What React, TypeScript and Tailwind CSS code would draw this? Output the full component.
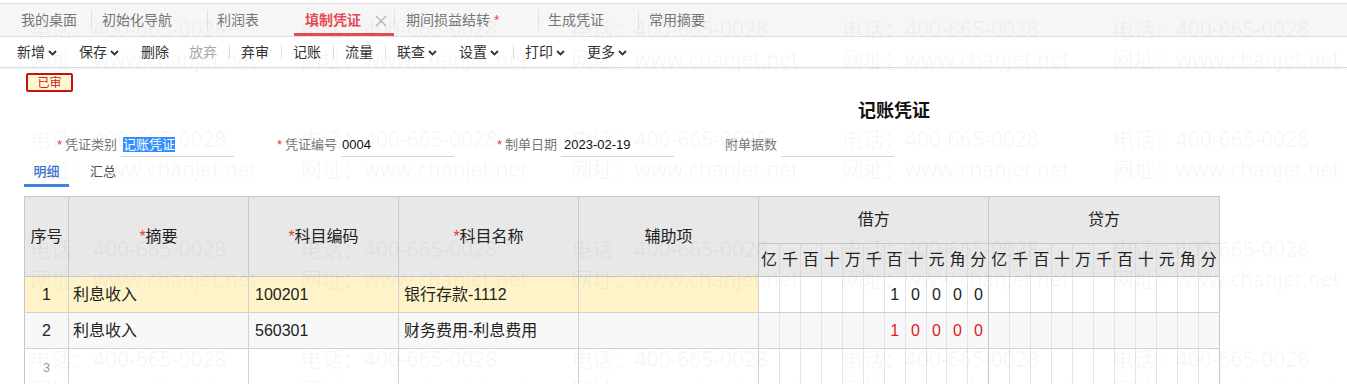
import React from "react";

const FONT = '"Liberation Sans","Noto Sans CJK SC",sans-serif';

function Chevron() {
  return (
    <svg width="9" height="6" viewBox="0 0 9 6" className="ml-[3px] mt-[2px]">
      <path d="M1 1 L4.5 4.5 L8 1" fill="none" stroke="#333" strokeWidth="1.8" />
    </svg>
  );
}

function Sep() {
  return <span className="ml-[12px] mr-[11px] h-[14px] w-px bg-[#dddddd]" />;
}

function TabSep() {
  return <span className="h-[20px] w-px bg-[#e2e2e2] self-center" />;
}

const digitsLabels = ["亿", "千", "百", "十", "万", "千", "百", "十", "元", "角", "分"];

function Watermark() {
  const tiles: { x: number; y: number }[] = [];
  for (let j = 0; j < 4; j++) {
    for (let i = 0; i < 5; i++) {
      tiles.push({ x: 30 + 270.7 * i, y: 14 + 110 * j });
    }
  }
  return (
    <div className="pointer-events-none absolute inset-0 overflow-hidden">
      {tiles.map((t, k) => (
        <div
          key={k}
          className="absolute whitespace-nowrap text-[21px] leading-[30px] text-black/[0.055]"
          style={{ left: t.x, top: t.y, fontFamily: '"Open Sans","Noto Sans CJK SC",sans-serif' }}
        >
          <div>电话：400-665-0028</div>
          <div>网址：www.chanjet.net</div>
        </div>
      ))}
    </div>
  );
}

export default function App() {
  const digitCols = Array.from({ length: 22 });
  return (
    <div className="relative h-[384px] w-[1347px] overflow-hidden bg-white text-[#333]" style={{ fontFamily: FONT }}>
      {/* Tab bar */}
      <div className="pt-[3px]">
        <div className="flex h-[34px] border-y border-[#e0e0e0] bg-[#f6f6f6] text-[14px] text-[#777]">
          <div className="flex w-[91px] items-center pl-[21px] pt-[1px]">我的桌面</div>
          <TabSep />
          <div className="flex w-[115px] items-center pl-[10px] pt-[1px]">初始化导航</div>
          <TabSep />
          <div className="flex w-[86px] items-center pl-[9px] pt-[1px]">利润表</div>
          <div className="flex w-[100px] items-center border-b-[3px] border-[#e84a55] pl-[11px] pt-[4px] font-bold text-[#e84a55]">
            填制凭证
            <svg width="12" height="12" viewBox="0 0 12 12" className="ml-[14px]">
              <path d="M1 1 L11 11 M11 1 L1 11" stroke="#b5b5b5" strokeWidth="1.3" />
            </svg>
          </div>
          <TabSep />
          <div className="flex w-[143px] items-center pl-[11px] pt-[1px]">
            期间损益结转<span className="ml-[4px] text-[#e84a55]">*</span>
          </div>
          <TabSep />
          <div className="flex w-[99px] items-center pl-[9px] pt-[1px]">生成凭证</div>
          <TabSep />
          <div className="flex items-center pl-[10px] pt-[1px]">常用摘要</div>
        </div>
        {/* Toolbar */}
        <div className="flex h-[31px] items-center border-b border-[#dcdcdc] pl-[17px] text-[14px] text-[#333] shadow-[0_1px_2px_rgba(0,0,0,0.06)]">
          <span className="flex items-center">新增<Chevron /></span>
          <span className="ml-[22px] flex items-center">保存<Chevron /></span>
          <span className="ml-[22px]">删除</span>
          <span className="ml-[20px] text-[#aaaaaa]">放弃</span>
          <Sep />
          <span>弃审</span>
          <Sep />
          <span>记账</span>
          <Sep />
          <span>流量</span>
          <Sep />
          <span className="flex items-center">联查<Chevron /></span>
          <span className="ml-[22px] flex items-center">设置<Chevron /></span>
          <span className="ml-[14px] mr-[11px] h-[14px] w-px bg-[#dddddd]" />
          <span className="flex items-center">打印<Chevron /></span>
          <span className="ml-[22px] flex items-center">更多<Chevron /></span>
        </div>
      </div>

      {/* Stamp */}
      <div className="ml-[26px] mt-[5px] flex h-[19px] w-[47px] items-center justify-center rounded-[2px] border-2 border-[#c41212] bg-[#fff7d2] text-[12px] leading-none text-[#d42020]">
        已审
      </div>

      {/* Title */}
      <div className="mt-[7px] pl-[858px] text-[18px] font-bold leading-[24px] text-[#111]">记账凭证</div>

      {/* Form row */}
      <div className="mt-[10px] flex pl-[57px] text-[13px]">
        {[
          { star: true, label: "凭证类别", value: "记账凭证", sel: true },
          { star: true, label: "凭证编号", value: "0004" },
          { star: true, label: "制单日期", value: "2023-02-19" },
          { star: false, label: "附单据数", value: "" },
        ].map((f, i) => (
          <div key={i} className="flex h-[24px] w-[220px] items-center">
            <span className="w-[8px] text-[#e4393c]">{f.star ? "*" : ""}</span>
            <span className="w-[56px] text-[#777]">{f.label}</span>
            <span className="flex h-[24px] w-[113px] items-center border-b border-[#d6d6d6] pl-[2px] text-[#111]">
              {f.sel ? (
                <span className="bg-[#3390ff] leading-[15px] text-white">{f.value}</span>
              ) : (
                <span className={i === 1 ? "-ml-[1px]" : "ml-[1px]"}>{f.value}</span>
              )}
            </span>
          </div>
        ))}
      </div>

      {/* Sub tabs */}
      <div className="mt-[3px] flex h-[27px] pl-[24px] text-[13px]">
        <div className="flex w-[45px] items-center justify-center border-b-[3px] border-[#3a86e0] font-medium text-[#3d72d2]">明细</div>
        <div className="ml-[21px] flex items-center pb-[3px] text-[#555]">汇总</div>
      </div>

      {/* Table */}
      <table className="ml-[24px] mt-[9px] table-fixed border-collapse border-l border-t border-[#c8c8c8] text-[16px]" style={{ width: 1195 }}>
        <colgroup>
          <col style={{ width: 44 }} />
          <col style={{ width: 180 }} />
          <col style={{ width: 150 }} />
          <col style={{ width: 180 }} />
          <col style={{ width: 180 }} />
          {digitCols.map((_, i) => (
            <col key={i} style={{ width: 20.95 }} />
          ))}
        </colgroup>
        <thead className="bg-[#e8e8e8] font-normal text-[#222]">
          <tr className="h-[47px]">
            <th rowSpan={2} className="border-b border-r border-[#c8c8c8] font-normal">序号</th>
            <th rowSpan={2} className="border-b border-r border-[#c8c8c8] font-normal">
              <span className="text-[#e4393c]">*</span>摘要
            </th>
            <th rowSpan={2} className="border-b border-r border-[#c8c8c8] font-normal">
              <span className="text-[#e4393c]">*</span>科目编码
            </th>
            <th rowSpan={2} className="border-b border-r border-[#c8c8c8] font-normal">
              <span className="text-[#e4393c]">*</span>科目名称
            </th>
            <th rowSpan={2} className="border-b border-r border-[#c8c8c8] font-normal">辅助项</th>
            <th colSpan={11} className="border-b border-r border-[#c8c8c8] font-normal">借方</th>
            <th colSpan={11} className="border-b border-r border-[#c8c8c8] font-normal">贷方</th>
          </tr>
          <tr className="h-[33px]">
            {digitCols.map((_, i) => (
              <th
                key={i}
                className={
                  "border-b border-[#c8c8c8] p-0 text-center font-normal " +
                  (i % 11 === 10 ? "border-r border-r-[#c8c8c8]" : "border-r border-r-[#dadada]")
                }
              >
                {digitsLabels[i % 11]}
              </th>
            ))}
          </tr>
        </thead>
        <tbody className="text-[#222]">
          {[
            { n: "1", s: "利息收入", c: "100201", name: "银行存款-1112", bg: "bg-[#fff4c9]", dbg: "bg-white", red: false },
            { n: "2", s: "利息收入", c: "560301", name: "财务费用-利息费用", bg: "bg-[#f8f8f8]", dbg: "bg-[#f8f8f8]", red: true },
          ].map((r, ri) => (
            <tr key={ri} className="h-[36px]">
              <td className={"border-b border-r border-[#d2d2d2] text-center " + r.bg}>{r.n}</td>
              <td className={"border-b border-r border-[#d2d2d2] pl-[4px] " + r.bg}>{r.s}</td>
              <td className={"border-b border-r border-[#d2d2d2] pl-[6px] " + r.bg}>{r.c}</td>
              <td className={"border-b border-r border-[#d2d2d2] pl-[5px] " + r.bg}>{r.name}</td>
              <td className={"border-b border-r border-[#d2d2d2] " + r.bg}></td>
              {digitCols.map((_, i) => {
                const vals: Record<number, string> = { 6: "1", 7: "0", 8: "0", 9: "0", 10: "0" };
                return (
                  <td
                    key={i}
                    className={
                      "border-b border-b-[#d2d2d2] p-0 text-center " +
                      r.dbg +
                      (r.red ? " text-[#e02020]" : "") +
                      (i % 11 === 10 ? " border-r border-r-[#c8c8c8]" : " border-r border-r-[#dae6f2]")
                    }
                  >
                    {i < 11 ? vals[i] ?? "" : ""}
                  </td>
                );
              })}
            </tr>
          ))}
          <tr className="h-[36px]">
            <td className="border-b border-r border-[#d2d2d2] pt-[2px] text-center text-[12px] text-[#999]">3</td>
            <td className="border-b border-r border-[#d2d2d2]"></td>
            <td className="border-b border-r border-[#d2d2d2]"></td>
            <td className="border-b border-r border-[#d2d2d2]"></td>
            <td className="border-b border-r border-[#d2d2d2]"></td>
            {digitCols.map((_, i) => (
              <td
                key={i}
                className={
                  "border-b border-b-[#d2d2d2] p-0 " +
                  (i % 11 === 10 ? "border-r border-r-[#c8c8c8]" : "border-r border-r-[#dae6f2]")
                }
              />
            ))}
          </tr>
        </tbody>
      </table>

      <Watermark />
    </div>
  );
}
